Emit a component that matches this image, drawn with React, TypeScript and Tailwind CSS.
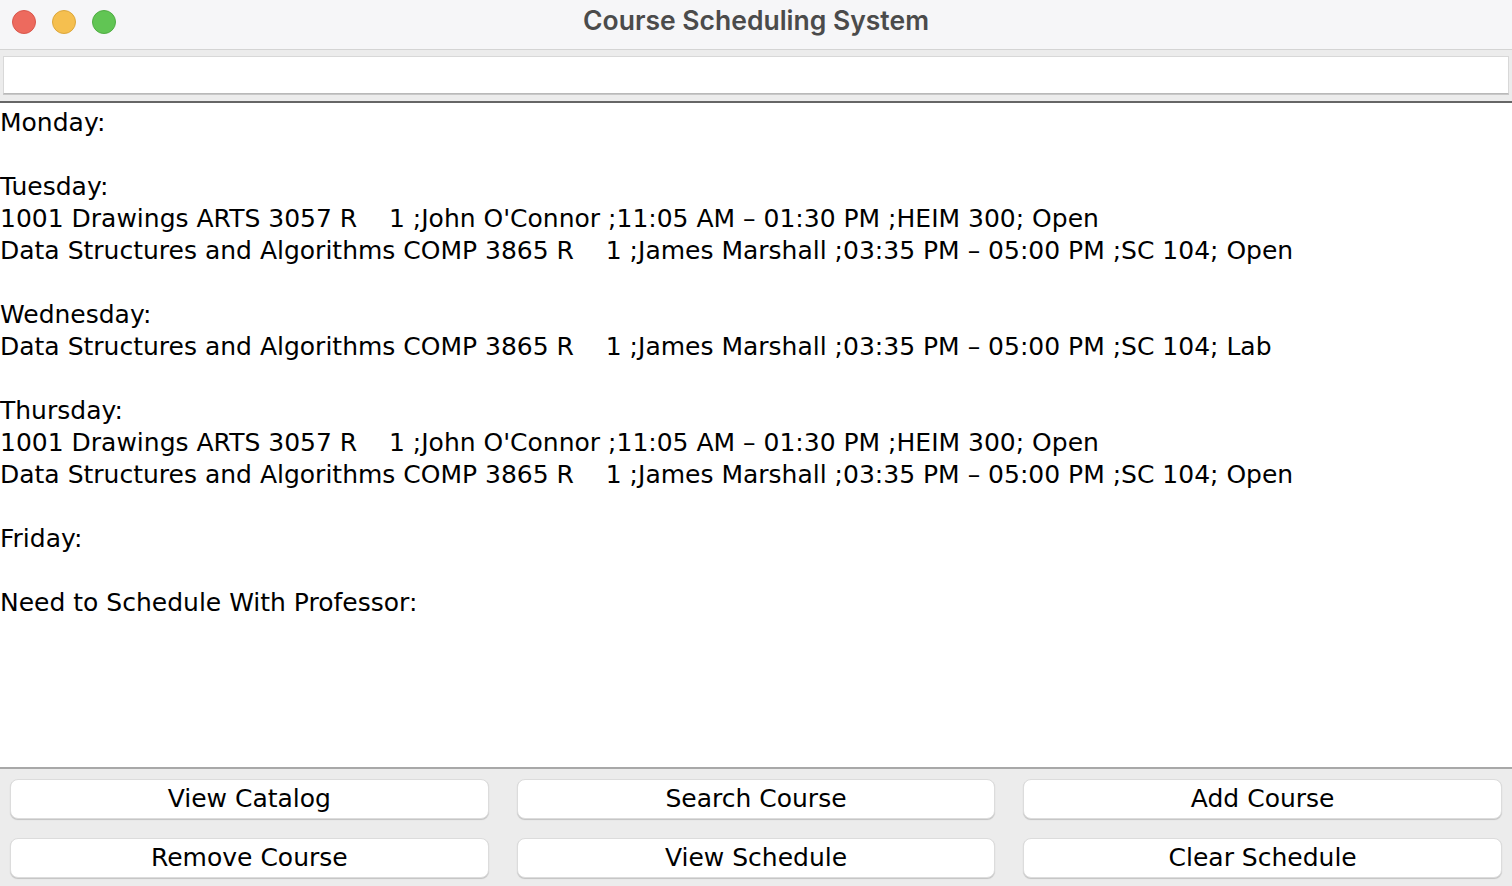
import React from "react";

const lines: string[] = [
  "Monday:",
  "",
  "Tuesday:",
  "1001 Drawings ARTS 3057 R    1 ;John O'Connor ;11:05 AM - 01:30 PM ;HEIM 300; Open",
  "Data Structures and Algorithms COMP 3865 R    1 ;James Marshall ;03:35 PM - 05:00 PM ;SC 104; Open",
  "",
  "Wednesday:",
  "Data Structures and Algorithms COMP 3865 R    1 ;James Marshall ;03:35 PM - 05:00 PM ;SC 104; Lab",
  "",
  "Thursday:",
  "1001 Drawings ARTS 3057 R    1 ;John O'Connor ;11:05 AM - 01:30 PM ;HEIM 300; Open",
  "Data Structures and Algorithms COMP 3865 R    1 ;James Marshall ;03:35 PM - 05:00 PM ;SC 104; Open",
  "",
  "Friday:",
  "",
  "Need to Schedule With Professor:",
];

const buttons = [
  "View Catalog",
  "Search Course",
  "Add Course",
  "Remove Course",
  "View Schedule",
  "Clear Schedule",
];

export default function App() {
  return (
    <div className="w-[1512px] h-[886px] flex flex-col overflow-hidden bg-[#ececec]" style={{ fontFamily: '"DejaVu Sans", sans-serif' }}>
      {/* Title bar */}
      <div className="h-[50px] shrink-0 bg-[#f6f6f8] border-b border-[#d4d4d4] relative flex items-center justify-center">
        <div className="absolute left-[12px] top-[10px] flex gap-[16px]">
          <div className="w-[24px] h-[24px] rounded-full bg-[#ed6a5e] border border-[#d9574c]" />
          <div className="w-[24px] h-[24px] rounded-full bg-[#f5bf4f] border border-[#dca73c]" />
          <div className="w-[24px] h-[24px] rounded-full bg-[#61c554] border border-[#50ad44]" />
        </div>
        <div className="text-[26.5px] font-semibold text-[#4b4b4b] mt-[-8px]" style={{ fontFamily: 'Inter, sans-serif' }}>
          Course Scheduling System
        </div>
      </div>
      {/* Text field */}
      <div className="h-[53px] shrink-0 bg-[#ececec] pt-[6px] px-[3px] pb-[7px] border-b-2 border-[#666666]">
        <div className="h-[38px] bg-white border border-[#d8d8d8] border-b-[#b9b9b9] shadow-[0_1px_0_#c8c8c8]" />
      </div>
      {/* Text area */}
      <div className="flex-1 bg-white border-b-2 border-[#a8a8a8] pt-[4px]">
        {lines.map((l, i) => (
          <div key={i} className="h-[32px] leading-[32px] text-[25px] text-black whitespace-pre">
            {l === "" ? "\u00a0" : l.replace(/ - /g, " – ")}
          </div>
        ))}
      </div>
      {/* Buttons */}
      <div className="h-[117px] shrink-0 bg-[#ececec] grid grid-cols-3 gap-x-[28px] gap-y-[18px] px-[10px] pt-[10px] pb-[8px]">
        {buttons.map((b) => (
          <div
            key={b}
            className="h-[40px] rounded-[8px] bg-white border border-[#dcdcdc] shadow-[0_1px_1px_rgba(0,0,0,0.18)] flex items-center justify-center text-[25px] text-black"
          >
            {b}
          </div>
        ))}
      </div>
    </div>
  );
}
